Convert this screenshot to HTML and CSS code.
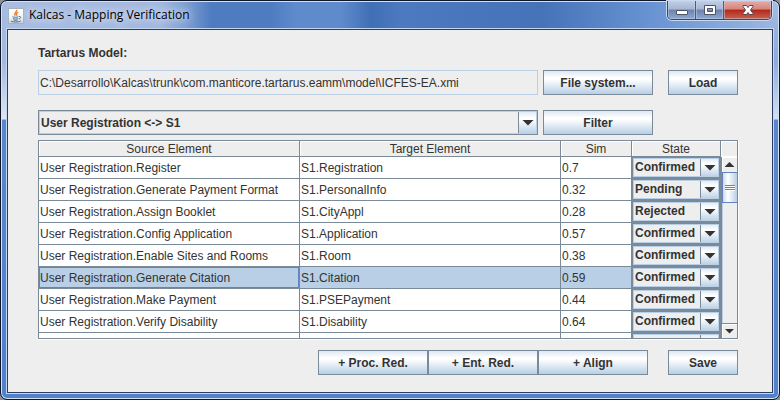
FILE: index.html
```
<!DOCTYPE html>
<html lang="en">
<head>
<meta charset="utf-8">
<title>Kalcas - Mapping Verification</title>
<link rel="stylesheet" href="styles.css">
</head>
<body>
<div class="window">
  <header class="titlebar">
    <svg class="app-icon" viewBox="0 0 16 16" aria-hidden="true">
      <defs><linearGradient id="tile" x1="0" y1="0" x2="0" y2="1"><stop offset="0" stop-color="#fff"/><stop offset=".6" stop-color="#f2f4f6"/><stop offset="1" stop-color="#c3ccd5"/></linearGradient></defs>
      <rect x=".5" y=".5" width="15" height="15" fill="url(#tile)" stroke="#a8b2bd"/>
      <path d="M8.6 1.8c1 2-3.400 2.800-1.400 6M10.300 4.200c-2.400 1-2.200 1.600-1.300 3.600" fill="none" stroke="#ee7d2b" stroke-width="1.300"/>
      <path d="M4.500 8.800c1.500.6 4.500.6 6 0M5 10.600c1.500.6 4 .6 5.300 0M5.500 12c1.200.5 3 .5 4.200 0M3 13.200c2 1.100 8 1.100 9.800-.2M11 8.600c2.400-.6 2.200 1.800.2 2.400" fill="none" stroke="#4b7796"/>
    </svg>
    <h1 class="title">Kalcas - Mapping Verification</h1>
    <div class="caption-buttons">
      <button class="cap" type="button" aria-label="Minimize"><svg viewBox="0 0 14 12"><rect x="1.500" y="6.500" width="11" height="4" rx=".5" fill="#fff" stroke="#4c5468"/></svg></button>
      <button class="cap" type="button" aria-label="Maximize"><svg viewBox="0 0 14 12"><path fill-rule="evenodd" d="M1.500 1.500h11v9h-11zM4.500 4.500v3h5v-3z" fill="#fff" stroke="#4c5468"/></svg></button>
      <button class="cap cap-close" type="button" aria-label="Close"><svg viewBox="0 0 14 12"><path d="M2 1.500h3.500L7 3.500l1.500-2H12v1L9.500 6l2.500 3.500v1H8.500L7 8.500l-1.500 2H2v-1L4.500 6 2 2.500z" fill="#fff" stroke="#5a4450"/></svg></button>
    </div>
  </header>
  <main class="content">
    <label class="caption" for="path">Tartarus Model:</label>
    <div class="row">
      <input class="path" id="path" type="text" readonly value="C:\Desarrollo\Kalcas\trunk\com.manticore.tartarus.eamm\model\ICFES-EA.xmi">
      <button class="btn btn-wide" type="button">File system...</button>
      <button class="btn btn-end" type="button">Load</button>
    </div>
    <div class="row">
      <div class="combo combo-main"><select aria-label="Mapping"><option>User Registration &lt;-&gt; S1</option></select></div>
      <button class="btn btn-wide" type="button">Filter</button>
      <span class="spacer"></span>
    </div>
    <div class="grid-pane">
      <div class="viewport">
        <table>
          <colgroup><col><col><col class="col-sim"><col class="col-state"></colgroup>
          <thead><tr><th>Source Element</th><th>Target Element</th><th>Sim</th><th>State</th></tr></thead>
          <tbody>
            <tr><td>User Registration.Register</td><td>S1.Registration</td><td>0.7</td><td><div class="combo"><select aria-label="State"><option>Confirmed</option></select></div></td></tr>
            <tr><td>User Registration.Generate Payment Format</td><td>S1.PersonalInfo</td><td>0.32</td><td><div class="combo"><select aria-label="State"><option>Pending</option></select></div></td></tr>
            <tr><td>User Registration.Assign Booklet</td><td>S1.CityAppl</td><td>0.28</td><td><div class="combo"><select aria-label="State"><option>Rejected</option></select></div></td></tr>
            <tr><td>User Registration.Config Application</td><td>S1.Application</td><td>0.57</td><td><div class="combo"><select aria-label="State"><option>Confirmed</option></select></div></td></tr>
            <tr><td>User Registration.Enable Sites and Rooms</td><td>S1.Room</td><td>0.38</td><td><div class="combo"><select aria-label="State"><option>Confirmed</option></select></div></td></tr>
            <tr class="selected"><td class="focused">User Registration.Generate Citation</td><td>S1.Citation</td><td>0.59</td><td><div class="combo"><select aria-label="State"><option>Confirmed</option></select></div></td></tr>
            <tr><td>User Registration.Make Payment</td><td>S1.PSEPayment</td><td>0.44</td><td><div class="combo"><select aria-label="State"><option>Confirmed</option></select></div></td></tr>
            <tr><td>User Registration.Verify Disability</td><td>S1.Disability</td><td>0.64</td><td><div class="combo"><select aria-label="State"><option>Confirmed</option></select></div></td></tr>
            <tr><td></td><td></td><td></td><td><div class="combo"><select aria-label="State"><option></option></select></div></td></tr>
          </tbody>
        </table>
      </div>
      <div class="scroll">
        <div class="corner"></div>
        <button class="arrow up" type="button" aria-label="Scroll up"></button>
        <div class="track"><div class="thumb"><i></i><i></i><i></i></div></div>
        <button class="arrow down" type="button" aria-label="Scroll down"></button>
      </div>
    </div>
    <footer class="actions">
      <button class="btn btn-wide" type="button">+ Proc. Red.</button>
      <button class="btn btn-wide" type="button">+ Ent. Red.</button>
      <button class="btn btn-wide" type="button">+ Align</button>
      <button class="btn btn-end btn-save" type="button">Save</button>
    </footer>
  </main>
</div>
</body>
</html>
```
FILE: styles.css
```
* { box-sizing: border-box; }

:root {
  --line: #7a8a99;
  --light: #b8cfe5;
  --focus: #6382bf;
  --face: #eeeeee;
  --metal: linear-gradient(#dde8f3 0, #ffffff 30%, #ffffff 36%, #b8cfe5 100%);
}

body {
  margin: 0;
  background: #8d8f96;
  color: #333333;
  font: 12px/14px "Liberation Sans", Arial, sans-serif;
}

button, select, input { margin: 0; color: inherit; font: inherit; }

.window {
  display: flex;
  flex-direction: column;
  height: 100vh;
  padding: 0 6px 6px;
  border: 1px solid #0e1628;
  border-radius: 7px;
  background:
    linear-gradient(#a6bce2 0, #a2b8e0 60px, #dfe6f4 118px, #5a86cf 119px, #5280ca 100%) left / 6px 100% no-repeat,
    linear-gradient(#a6bce2 0, #8eaadc 60px, #d5dff1 118px, #5a86cf 119px, #5280ca 100%) right / 6px 100% no-repeat,
    linear-gradient(90deg, #a9bde0 0, #a3b8df 160px, #7f9fd3 185px, #4f7cc0 210px, #4f7cc0 270px, #5f8bcd 295px, #5f8bcd 340px, #416fb4 370px, #4c79bf 400px, #4672b8 540px, #6590d0 640px, #9db7e2 100%) top / 100% 29px no-repeat,
    #5280ca;
  box-shadow: inset 0 0 0 1px #d2e2f5;
}

.titlebar { display: flex; height: 28px; flex: none; padding: 0 0 0 1px; }
.app-icon { width: 16px; height: 16px; margin-top: 7px; }
.title {
  flex: 1;
  margin: 0;
  padding: 7px 0 0 5px;
  color: #000;
  font: 12px/14px "Open Sans", "Noto Sans", sans-serif;
  text-shadow: 0 0 6px #dfe8f6, 0 0 10px #dfe8f6;
}

.caption-buttons {
  display: flex;
  height: 19px;
  border: 1px solid #38486a;
  border-top: 0;
  border-radius: 0 0 5px 5px;
  overflow: hidden;
  box-shadow: 0 0 0 1px #c8d8f0;
}
.titlebar .caption-buttons { margin-right: 1px; }
.cap {
  display: grid;
  place-items: center;
  width: 28px;
  padding: 0;
  border: 0;
  border-right: 1px solid #4c5b7c;
  background: linear-gradient(#c3cee4 0, #a5b5d3 45%, #6c82ab 50%, #8fa9d2 100%);
  box-shadow: inset 0 0 0 1px #c4d1e880;
}
.cap svg { width: 14px; height: 12px; }
.cap-close {
  width: 47px;
  border-right: 0;
  background: linear-gradient(#e5aaa4 0, #d4867d 45%, #b3281c 50%, #c9614e 100%);
}

.content {
  display: flex;
  flex: 1;
  flex-direction: column;
  min-height: 0;
  padding: 15px 34px 17px 30px;
  border: 1px solid #2b3c5e;
  outline: 1px solid #c3d8f2;
  background: var(--face);
}

.caption { height: 15px; margin-bottom: 10px; font-weight: bold; line-height: 16px; }

.row { display: flex; gap: 5px; height: 25px; margin-bottom: 15px; }
.row + .row { margin-bottom: 5px; }

.path {
  flex: 1;
  min-width: 0;
  padding: 0 1px;
  border: 1px solid var(--light);
  background: var(--face);
  outline: 0;
}

.btn {
  height: 25px;
  padding: 0;
  border: 1px solid var(--line);
  background: var(--metal);
  font-weight: bold;
}
.btn-wide { width: 110px; }
.btn-end, .spacer { width: 70px; margin-left: 10px; }

.combo { position: relative; height: 21px; }
.combo select {
  display: block;
  width: 100%;
  height: 100%;
  padding: 0 20px 0 2px;
  border: 1px solid var(--line);
  border-radius: 0;
  appearance: none;
  background:
    linear-gradient(var(--line), var(--line)) right 18px top / 1px 100% no-repeat,
    var(--metal) right / 18px 100% no-repeat,
    var(--face);
  box-shadow: inset 0 0 0 1px var(--light);
  font-weight: bold;
}
.combo::after {
  content: "";
  position: absolute;
  top: calc(50% - 3px);
  right: 4px;
  width: 12px;
  height: 6px;
  background: #333;
  clip-path: polygon(0 0, 100% 0, 50% 100%);
  pointer-events: none;
}
.combo-main { flex: 1; height: 25px; }

.grid-pane {
  display: flex;
  flex: 1;
  min-height: 0;
  border: 1px solid var(--line);
  box-shadow: 0 1px #fff, 1px 0 #fff;
}
.viewport { flex: 1; overflow: hidden; background: #fff; }

table { width: 100%; table-layout: fixed; border-collapse: separate; border-spacing: 0; }
.col-sim { width: 71px; }
.col-state { width: 89px; }
th, td {
  padding: 2px 1px 0;
  border-right: 1px solid var(--line);
  border-bottom: 1px solid var(--line);
  white-space: nowrap;
}
th {
  height: 16px;
  background: var(--face);
  box-shadow: inset 1px 1px #fff;
  font-weight: normal;
  line-height: 13px;
}
td { height: 22px; line-height: 19px; }
td:last-child { padding: 0; }
.selected td { background: var(--light); }
.selected .focused { box-shadow: inset 0 0 0 1px var(--focus); }

.scroll { display: flex; flex-direction: column; width: 16px; background: var(--face); }
.corner { height: 16px; border-bottom: 1px solid #fff; box-shadow: inset 1px 1px #fff; }
.arrow {
  display: grid;
  place-items: center;
  height: 15px;
  padding: 0;
  border: 0;
  border-left: 1px solid var(--line);
  background: var(--face);
  box-shadow: inset 1px 1px #fff;
}
.arrow::after { content: ""; width: 10px; height: 5px; background: #333; clip-path: polygon(0 0, 100% 0, 50% 100%); }
.up::after { clip-path: polygon(50% 0, 100% 100%, 0 100%); }
.down { border-top: 1px solid var(--line); }
.track { flex: 1; border-left: 1px solid var(--line); box-shadow: inset 1px 0 var(--light); }
.thumb {
  display: flex;
  flex-direction: column;
  justify-content: center;
  gap: 1px;
  height: 31px;
  padding: 0 2px;
  border: 1px solid var(--focus);
  border-right: 0;
  background: linear-gradient(90deg, #c8daec, #fff 35%, #b8cfe5);
}
.thumb i { height: 1px; background: var(--focus); box-shadow: 0 1px #fff; }

.actions { display: flex; justify-content: flex-end; margin-top: 11px; }
.btn-save { margin-left: 20px; }
```
